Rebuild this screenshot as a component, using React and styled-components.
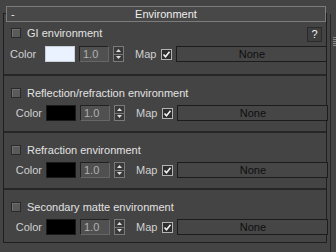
import React from "react";
import styled, { createGlobalStyle } from "styled-components";

const GlobalStyle = createGlobalStyle`
  html, body {
    margin: 0;
    padding: 0;
    background: #444444;
  }
  body {
    font-family: "Liberation Sans", Arial, sans-serif;
    font-size: 11px;
    color: #dcdcdc;
  }
`;

const Page = styled.div`
  width: 336px;
  height: 252px;
  display: flex;
  overflow: hidden;
  background: #444444;
`;

const Panel = styled.div`
  width: 327px;
  padding: 6px 0 0 3px;
  box-sizing: border-box;
`;

const Header = styled.div`
  position: relative;
  z-index: 1;
  margin-left: 3px;
  width: 320px;
  height: 16px;
  box-sizing: border-box;
  border: 1px solid #7c7c7c;
  background: #484848;
  display: flex;
  align-items: center;
  justify-content: center;
  color: #eeeeee;
  line-height: 14px;
`;

const Collapse = styled.span`
  position: absolute;
  left: 4px;
  top: 0;
  color: #e8e8e8;
`;

const Frame = styled.div`
  margin-top: -9px;
  width: 324px;
  box-sizing: border-box;
  border: 1px solid #1f1f1f;
  padding-top: 8px;
`;

const Section = styled.div`
  padding: ${(p) => (p.$first ? "5px 0 12px" : p.$last ? "11px 0 7px" : "11px 0 10px")};
  border-top: ${(p) => (p.$first ? "none" : "2px solid #262626")};
  display: flex;
  flex-direction: column;
  gap: ${(p) => (p.$first ? "3px" : "6px")};
`;

const TitleRow = styled.div`
  display: flex;
  align-items: ${(p) => (p.$tall ? "flex-start" : "center")};
  height: ${(p) => (p.$tall ? "16px" : "12px")};
  padding: 0 4px 0 7px;
`;

const Check = styled.span`
  width: 10px;
  height: 10px;
  box-sizing: border-box;
  border: 1px solid #2a2a2a;
  background: #5a5a5a;
  box-shadow: inset 1px 1px 0 #6e6e6e;
  margin-top: ${(p) => (p.$tall ? "1px" : "0")};
  flex: none;
`;

const Title = styled.span`
  margin-left: 6px;
  line-height: 12px;
  color: #e2e2e2;
`;

const Help = styled.button`
  margin-left: auto;
  width: 15px;
  height: 15px;
  box-sizing: border-box;
  border: 1px solid #2a2a2a;
  background: #3e3e3e;
  color: #f2f2f2;
  font-family: "Liberation Sans", Arial, sans-serif;
  font-size: 11px;
  padding: 0;
  line-height: 13px;
`;

const Row = styled.div`
  display: flex;
  align-items: center;
  height: 16px;
  padding-left: 6px;
`;

const Label = styled.span`
  width: ${(p) => p.$width}px;
  box-sizing: border-box;
  text-align: ${(p) => p.$align};
  padding-right: ${(p) => (p.$align === "right" ? "4px" : "0")};
  color: #d0d0d0;
  flex: none;
`;

const Swatch = styled.span`
  width: 30px;
  height: 16px;
  box-sizing: border-box;
  border: 1px solid ${(p) => (p.$light ? "#c8d0dc" : "#1a1a1a")};
  background: ${(p) => p.$color};
  flex: none;
`;

const Field = styled.span`
  margin-left: 4px;
  width: 30px;
  height: 16px;
  box-sizing: border-box;
  border: 1px solid #222222;
  border-right-color: #666666;
  border-bottom-color: #666666;
  background: #505050;
  color: #b0b0b0;
  padding-left: 3px;
  line-height: 14px;
  flex: none;
`;

const Arrows = styled.span`
  margin-left: 4px;
  width: 11px;
  height: 16px;
  box-sizing: border-box;
  border: 1px solid #7a7a7a;
  background: #3a3a3a;
  display: flex;
  flex-direction: column;
  flex: none;
`;

const ArrowHalf = styled.span`
  flex: 1;
  display: flex;
  align-items: center;
  justify-content: center;
  border-top: ${(p) => (p.$down ? "1px solid #7a7a7a" : "none")};
`;

const MapLabel = styled.span`
  margin-left: 11px;
  color: #d0d0d0;
`;

const MapCheck = styled.span`
  margin-left: 5px;
  width: 11px;
  height: 11px;
  box-sizing: border-box;
  border: 1px solid #b4b4b4;
  background: #2e2e2e;
  display: flex;
  align-items: center;
  justify-content: center;
  flex: none;
`;

const NoneButton = styled.span`
  margin-left: 4px;
  width: 151px;
  height: 16px;
  box-sizing: border-box;
  border: 1px solid #1c1c1c;
  background: #464646;
  color: #0e0e0e;
  text-align: center;
  line-height: 14px;
  flex: none;
`;

const Scroll = styled.div`
  margin-top: 14px;
  margin-left: 3px;
  flex: 1;
  border-left: 1px solid #262626;
  position: relative;
`;

const Grip = styled.div`
  position: absolute;
  left: 2px;
  top: 23px;
  width: 4px;
  height: 9px;
  background: repeating-linear-gradient(
    to bottom,
    #8a8a8a 0,
    #8a8a8a 1px,
    transparent 1px,
    transparent 2px
  );
`;

const Triangle = ({ down }) => (
  <svg width="5" height="3" viewBox="0 0 5 3">
    <path d={down ? "M0 0H5L2.5 3Z" : "M0 3H5L2.5 0Z"} fill="#e0e0e0" />
  </svg>
);

const Tick = () => (
  <svg width="9" height="9" viewBox="0 0 9 9">
    <path d="M1.5 4.5L3.5 6.8L7.5 1.8" fill="none" stroke="#f4f4f4" strokeWidth="1.6" />
  </svg>
);

const sections = [
  { title: "GI environment", color: "#eaf2ff", light: true },
  { title: "Reflection/refraction environment", color: "#000000" },
  { title: "Refraction environment", color: "#000000" },
  { title: "Secondary matte environment", color: "#000000" },
];

const EnvSection = ({ title, color, light, first, last }) => (
  <Section $first={first} $last={last}>
    <TitleRow $tall={first}>
      <Check $tall={first} />
      <Title>{title}</Title>
      {first && <Help>?</Help>}
    </TitleRow>
    <Row>
      <Label $width={first ? 35 : 36} $align={first ? "left" : "right"}>
        Color
      </Label>
      <Swatch $color={color} $light={light} />
      <Field>1.0</Field>
      <Arrows>
        <ArrowHalf>
          <Triangle />
        </ArrowHalf>
        <ArrowHalf $down>
          <Triangle down />
        </ArrowHalf>
      </Arrows>
      <MapLabel>Map</MapLabel>
      <MapCheck>
        <Tick />
      </MapCheck>
      <NoneButton>None</NoneButton>
    </Row>
  </Section>
);

const App = () => (
  <Page>
    <GlobalStyle />
    <Panel>
      <Header>
        <Collapse>-</Collapse>
        Environment
      </Header>
      <Frame>
        {sections.map((s, i) => (
          <EnvSection
            key={s.title}
            {...s}
            first={i === 0}
            last={i === sections.length - 1}
          />
        ))}
      </Frame>
    </Panel>
    <Scroll>
      <Grip />
    </Scroll>
  </Page>
);

export default App;
